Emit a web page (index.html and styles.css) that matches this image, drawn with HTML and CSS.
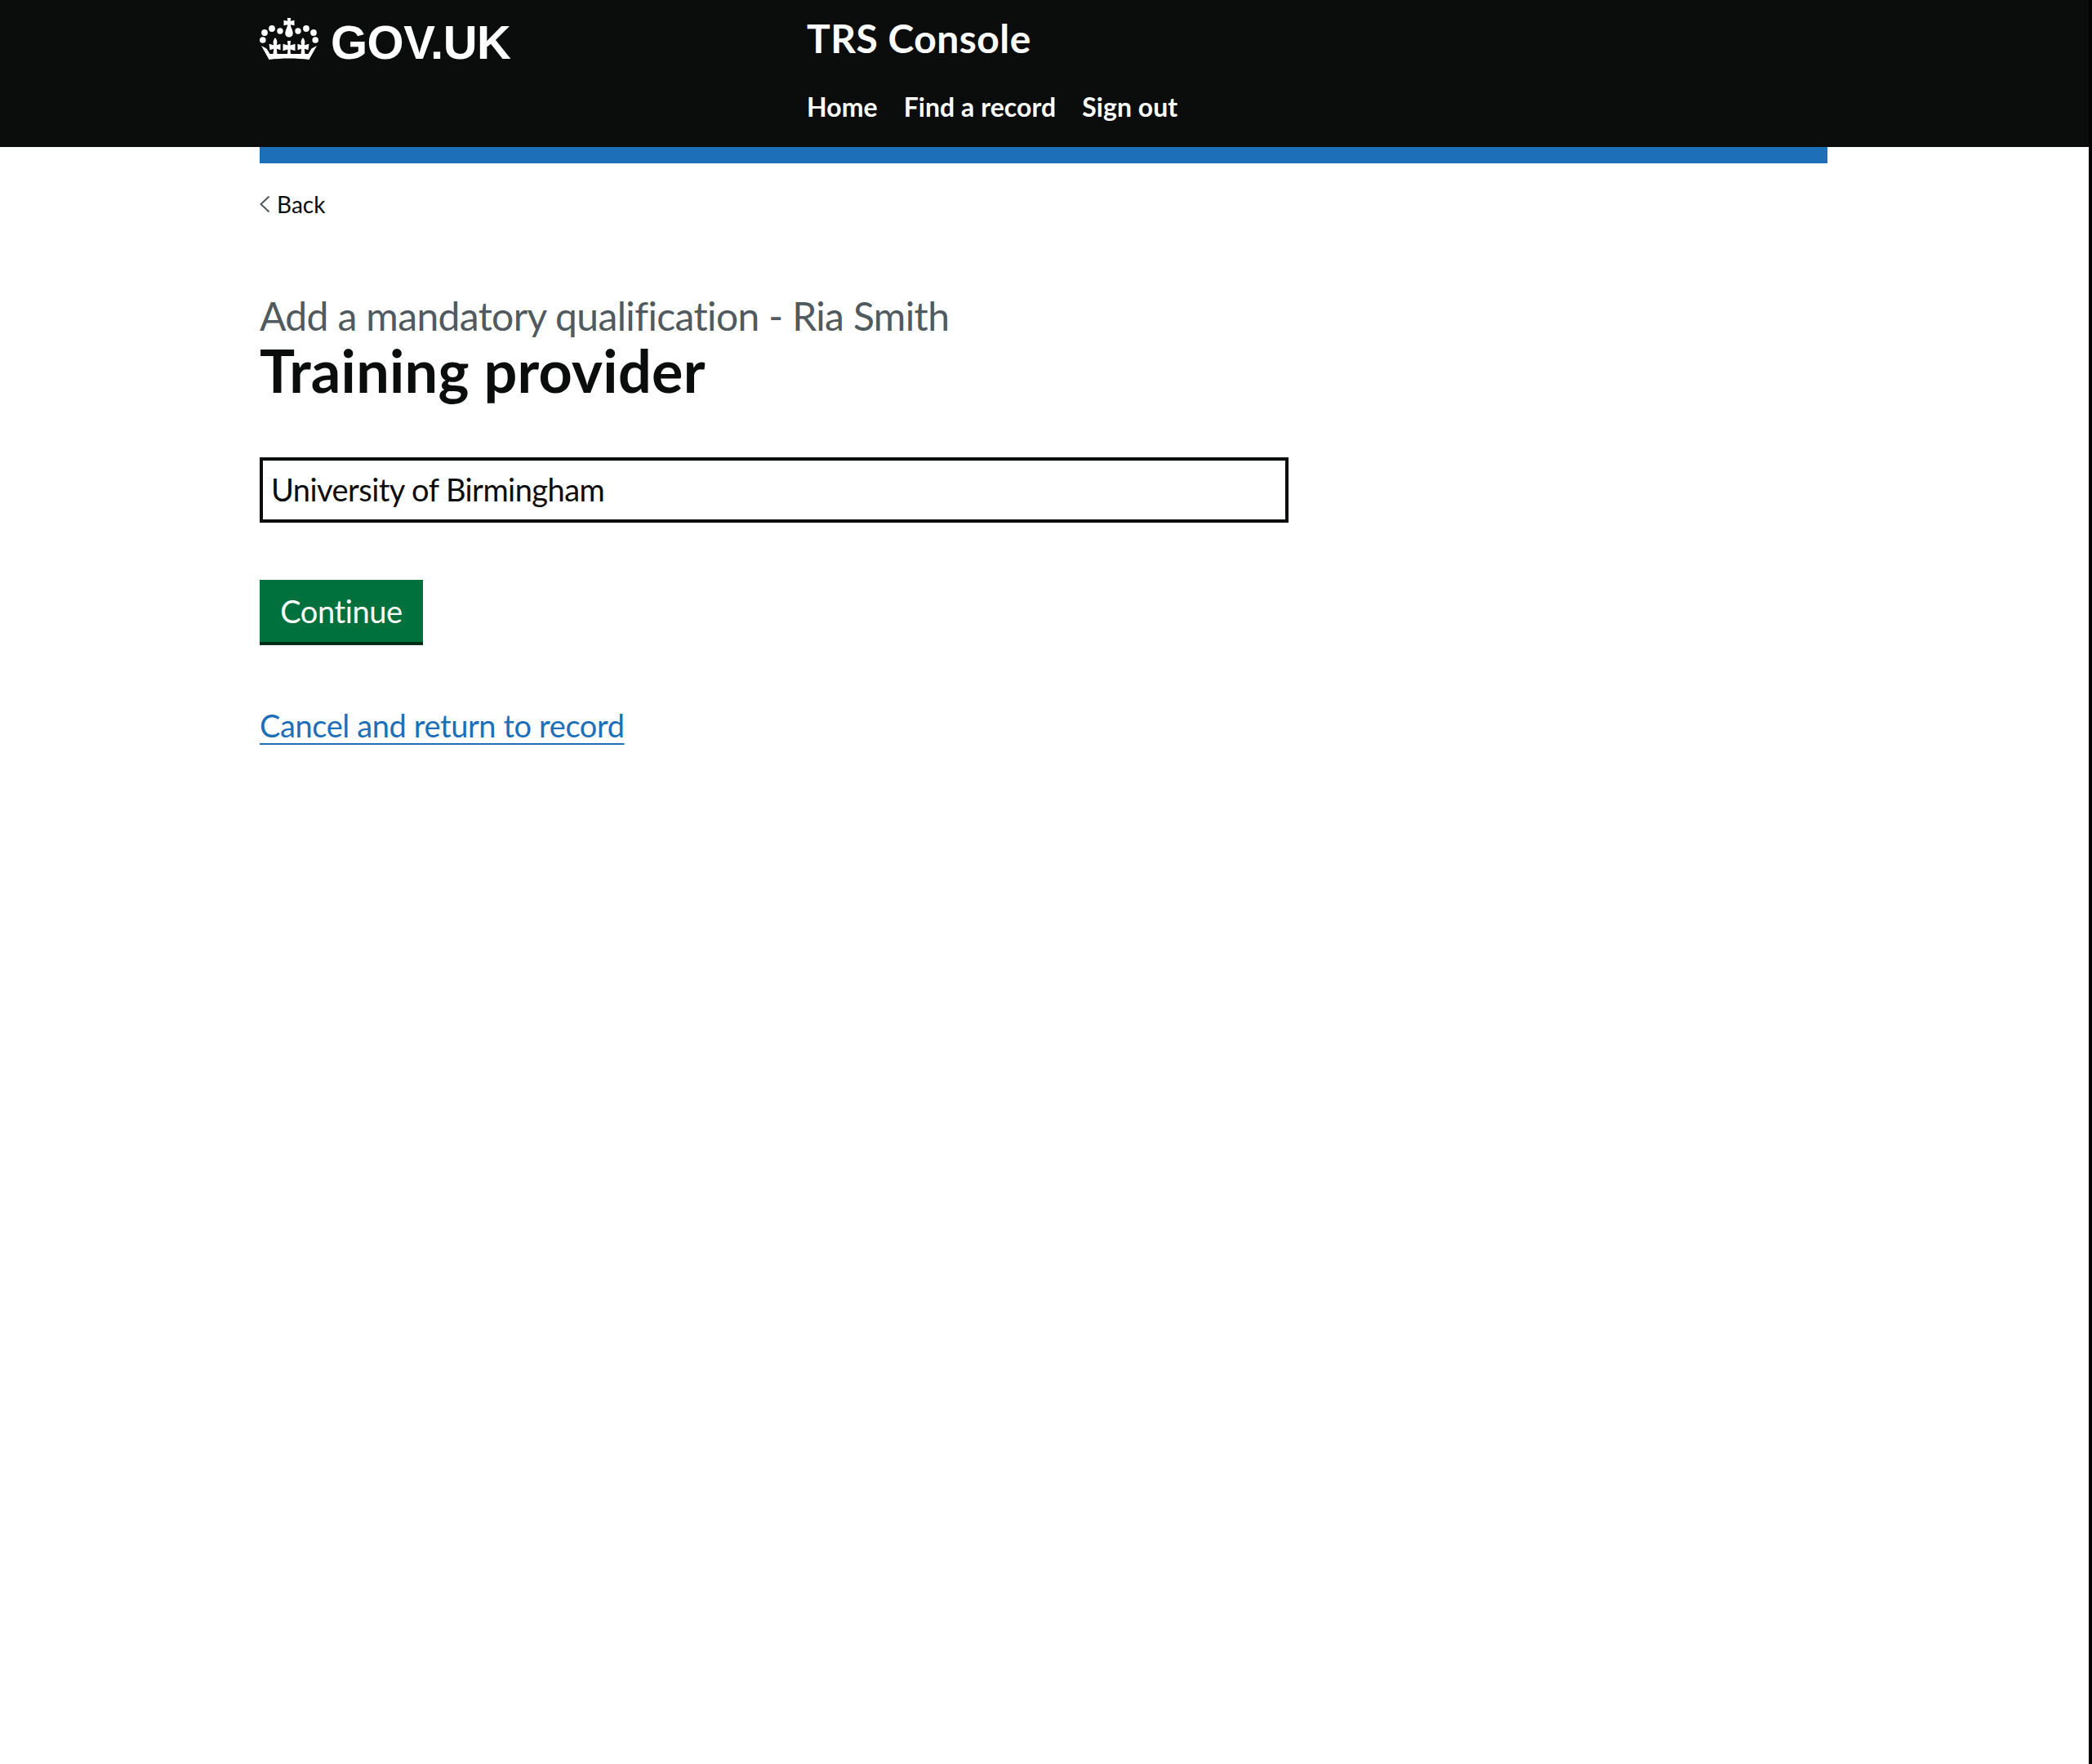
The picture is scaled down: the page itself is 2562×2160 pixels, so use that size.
FILE: index.html
```html
<!DOCTYPE html>
<html lang="en">
<head>
<meta charset="utf-8">
<title>Training provider - TRS Console</title>
<link rel="stylesheet" href="styles.css">
</head>
<body>
<div class="frame">
  <div class="page">
    <header class="header">
      <div class="header-inner">
        <a class="logo" href="#">
          <svg class="crown" viewBox="0 0 72 51" aria-hidden="true">
            <g fill="#fff">
              <path d="M33.800 0h4.400l-.4 3.800 4.700-1v6.400l-4.700-1 .6 2.800c1.400 3 2.300 5.500 2.300 8 0 2.800-2 4.500-4.700 4.500s-4.700-1.700-4.700-4.500c0-2.500.9-5 2.300-8l.6-2.800-4.700 1V2.800l4.700 1z"/>
              <circle cx="15" cy="13" r="3.900"/><circle cx="25" cy="16" r="3.700"/>
              <circle cx="47" cy="16" r="3.700"/><circle cx="57" cy="13" r="3.900"/>
              <circle cx="6" cy="18" r="3.900"/><circle cx="66" cy="18" r="3.900"/>
              <circle cx="3.800" cy="27" r="3.800"/><circle cx="68.200" cy="27" r="3.800"/>
              <path d="M34 28h4l-.5 5.500 6-1.800v8.600l-6-1.800.5 6h-4l.5-6-6 1.800v-8.600l6 1.800z"/>
              <path d="M19 24c2.400 3 3 5.500 1.800 9.200l4.700-1.500v7.600l-4.700-1.500.7 6.200h-5l.7-6.200-4.700 1.500 -1-7.600 5.700 1.500C16 29.500 16.600 27 19 24z"/>
              <path d="M53 24c-2.400 3-3 5.500-1.800 9.200l-4.700-1.500v7.600l4.700-1.500-.7 6.200h5l-.7-6.200 4.700 1.500 1-7.600-5.700 1.500C56 29.500 55.400 27 53 24z"/>
              <path d="M2 34l6.500 3.500 4 6.500h47l4-6.500L70 34l-9.500 17c-8-1-16-1.500-24.500-1.500S19.500 50 11.500 51z"/>
            </g>
          </svg>
          <span class="logo-text">GOV.UK</span>
        </a>
        <div class="service">
          <a class="service-name" href="#">TRS Console</a>
          <nav class="nav">
            <a href="#">Home</a>
            <a href="#">Find a record</a>
            <a href="#">Sign out</a>
          </nav>
        </div>
      </div>
    </header>
    <div class="container">
      <div class="blue-bar"></div>
      <a class="back" href="#">
        <svg class="chevron" viewBox="0 0 12 20" aria-hidden="true"><polyline points="11.500,.5 1.500,10 11.500,19.500" fill="none" stroke="#505a5f" stroke-width="2"/></svg>
        <span>Back</span>
      </a>
      <main class="main">
        <span class="caption">Add a mandatory qualification - Ria Smith</span>
        <h1 class="title">Training provider</h1>
        <input class="input" type="text" value="University of Birmingham" aria-label="Training provider">
        <button class="button" type="button">Continue</button>
        <a class="cancel" href="#">Cancel and return to record</a>
      </main>
    </div>
  </div>
  <div class="edge"></div>
</div>
</body>
</html>
```
FILE: styles.css
```css
* { box-sizing: border-box; }
html, body { margin: 0; padding: 0; background: #fff; }
body { font-family: Lato, "Noto Sans", sans-serif; color: #0b0c0c; font-variant-ligatures: none; }
a { text-decoration: none; color: inherit; }
.frame { display: flex; min-height: 2160px; }
.page { flex: 1; min-width: 0; }
.edge { width: 4px; background: #000; }
.header { background: #0b0c0c; height: 180px; color: #fff; }
.header-inner { width: 1920px; margin-left: 318px; display: flex; }
.logo { display: flex; width: 670px; align-items: flex-start; padding-top: 22px; }
.crown { width: 72px; height: 51px; flex: none; }
.logo-text { font-family: "Liberation Sans", Arial, sans-serif; font-weight: 700; font-size: 58px; line-height: 60px; margin-left: 15px; letter-spacing: -.5px; }
.service { display: flex; flex-direction: column; }
.service-name { font-weight: 700; font-size: 48px; line-height: 60px; margin-top: 17px; letter-spacing: .45px; }
.nav { display: flex; gap: 32px; margin-top: 34px; font-weight: 700; font-size: 32px; line-height: 40px; letter-spacing: .05px; }
.container { width: 1920px; margin-left: 318px; }
.blue-bar { height: 20px; background: #1d70b8; }
.back { display: flex; align-items: center; margin-top: 30px; font-size: 28px; line-height: 40px; height: 40px; }
.chevron { width: 12px; height: 20px; margin-right: 9px; flex: none; }
.main { display: flex; flex-direction: column; align-items: flex-start; padding-top: 87px; }
.caption { font-size: 48px; line-height: 60px; color: #505a5f; letter-spacing: -.64px; }
.title { margin: -4px 0 67px; font-size: 72px; line-height: 80px; font-weight: 700; letter-spacing: .25px; }
.input { width: 1260px; height: 80px; border: 4px solid #0b0c0c; border-radius: 0; padding: 9px 10px 11px; font: 400 38px/50px Lato, "Noto Sans", sans-serif; font-variant-ligatures: none; letter-spacing: -.55px; color: #0b0c0c; background: #fff; margin: 0 0 70px; outline: 0; }
.button { width: 200px; height: 80px; border: 0; border-radius: 0; padding: 0 0 4px; background: #00703c; box-shadow: inset 0 -4px 0 #002d18; color: #fff; font: 400 38px/50px Lato, "Noto Sans", sans-serif; font-variant-ligatures: none; letter-spacing: -.4px; margin: 0 0 73px; }
.cancel { font-size: 38px; line-height: 50px; color: #1d70b8; text-decoration: underline; text-decoration-thickness: 2px; text-underline-offset: 7px; letter-spacing: -.4px; }
```
